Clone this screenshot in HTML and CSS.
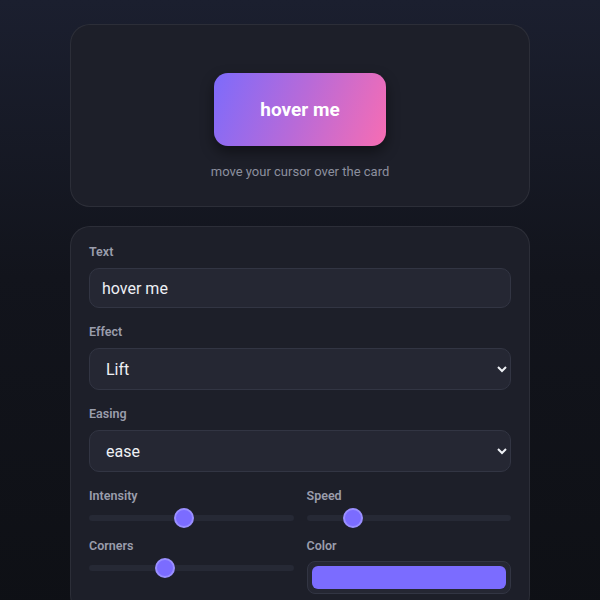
FILE: index.html
```html
<!DOCTYPE html>
<html lang="en">
<head>
<meta charset="utf-8">
<title>Hover effect playground</title>
<link rel="stylesheet" href="styles.css">
</head>
<body>
<main class="wrap">
  <section class="card preview">
    <button class="demo" type="button">hover me</button>
    <p class="hint">move your cursor over the card</p>
  </section>
  <section class="card controls">
    <div class="field">
      <label class="lbl" for="txt">Text</label>
      <input id="txt" class="inp" type="text" value="hover me">
    </div>
    <div class="field">
      <label class="lbl" for="eff">Effect</label>
      <select id="eff" class="inp sel">
        <option>Lift</option>
        <option>Glow</option>
        <option>Scale</option>
      </select>
    </div>
    <div class="field">
      <label class="lbl" for="eas">Easing</label>
      <select id="eas" class="inp sel">
        <option>ease</option>
        <option>linear</option>
        <option>ease-in-out</option>
      </select>
    </div>
    <div class="pair">
      <div class="mini">
        <label class="lbl" for="int">Intensity</label>
        <input id="int" class="range" type="range" min="0" max="100" value="46">
      </div>
      <div class="mini">
        <label class="lbl" for="spd">Speed</label>
        <input id="spd" class="range" type="range" min="0" max="100" value="20">
      </div>
      <div class="mini">
        <label class="lbl" for="cor">Corners</label>
        <input id="cor" class="range" type="range" min="0" max="100" value="36">
      </div>
      <div class="mini">
        <label class="lbl" for="col">Color</label>
        <input id="col" class="color" type="color" value="#7b6cff">
      </div>
    </div>
  </section>
</main>
</body>
</html>
```

FILE: styles.css
```css
* { box-sizing: border-box; }
html { color-scheme: dark; }
body {
  margin: 0;
  min-height: 600px;
  font-family: Roboto, "Liberation Sans", sans-serif;
  background: linear-gradient(180deg, #1b1f2f 0%, #12141c 45%, #0e1015 100%);
  color: #e6e7ee;
}
.wrap {
  width: 460px;
  margin: 0 auto;
  padding-top: 24px;
  display: flex;
  flex-direction: column;
  gap: 19px;
}
.card {
  background: #1d1f29;
  border: 1px solid rgba(255,255,255,0.07);
  border-radius: 20px;
}
.preview {
  height: 183px;
  padding-top: 48px;
  display: flex;
  flex-direction: column;
  align-items: center;
}
.demo {
  width: 172px;
  height: 73px;
  border: none;
  border-radius: 14px;
  background: linear-gradient(110deg, #7d6bfb 0%, #b86ad8 50%, #f76db3 100%);
  color: #fff;
  font-family: Roboto, "Liberation Sans", sans-serif;
  font-weight: 700;
  font-size: 19px;
  box-shadow: 0 6px 14px rgba(0,0,0,0.45);
}
.hint {
  margin: 18px 0 0;
  font-size: 13px;
  color: #8c8f9e;
}
.controls {
  padding: 17px 18px 20px;
  display: flex;
  flex-direction: column;
  gap: 16px;
}
.field { display: flex; flex-direction: column; }
.lbl {
  display: block;
  font-size: 12.5px;
  font-weight: 600;
  line-height: 16px;
  color: #9a9dac;
}
.field .lbl { margin-bottom: 8px; }
.inp {
  height: 40px;
  border: 1px solid #323543;
  border-radius: 10px;
  background: #252733;
  color: #eef0f5;
  font-family: Roboto, "Liberation Sans", sans-serif;
  font-size: 16px;
  padding: 0 12px;
  outline: none;
}
.sel { height: 42px; padding: 0 8px 0 12px; }
.pair {
  display: grid;
  grid-template-columns: 1fr 1fr;
  column-gap: 13px;
  row-gap: 10px;
}
.mini { display: flex; flex-direction: column; }
.range {
  -webkit-appearance: none;
  appearance: none;
  width: 100%;
  height: 20px;
  margin: 4px 0 0;
  background: transparent;
}
.range::-webkit-slider-runnable-track {
  height: 6px;
  border-radius: 3px;
  background: #262935;
}
.range::-webkit-slider-thumb {
  -webkit-appearance: none;
  width: 20px;
  height: 20px;
  margin-top: -7px;
  border-radius: 50%;
  background: #7b6cff;
  border: 2px solid #9a8fff;
}
.color {
  -webkit-appearance: none;
  appearance: none;
  width: 100%;
  height: 33px;
  margin-top: 7px;
  padding: 4px;
  border: 1px solid #323543;
  border-radius: 8px;
  background: #252733;
}
.color::-webkit-color-swatch-wrapper { padding: 0; }
.color::-webkit-color-swatch { border: none; border-radius: 6px; }
```
